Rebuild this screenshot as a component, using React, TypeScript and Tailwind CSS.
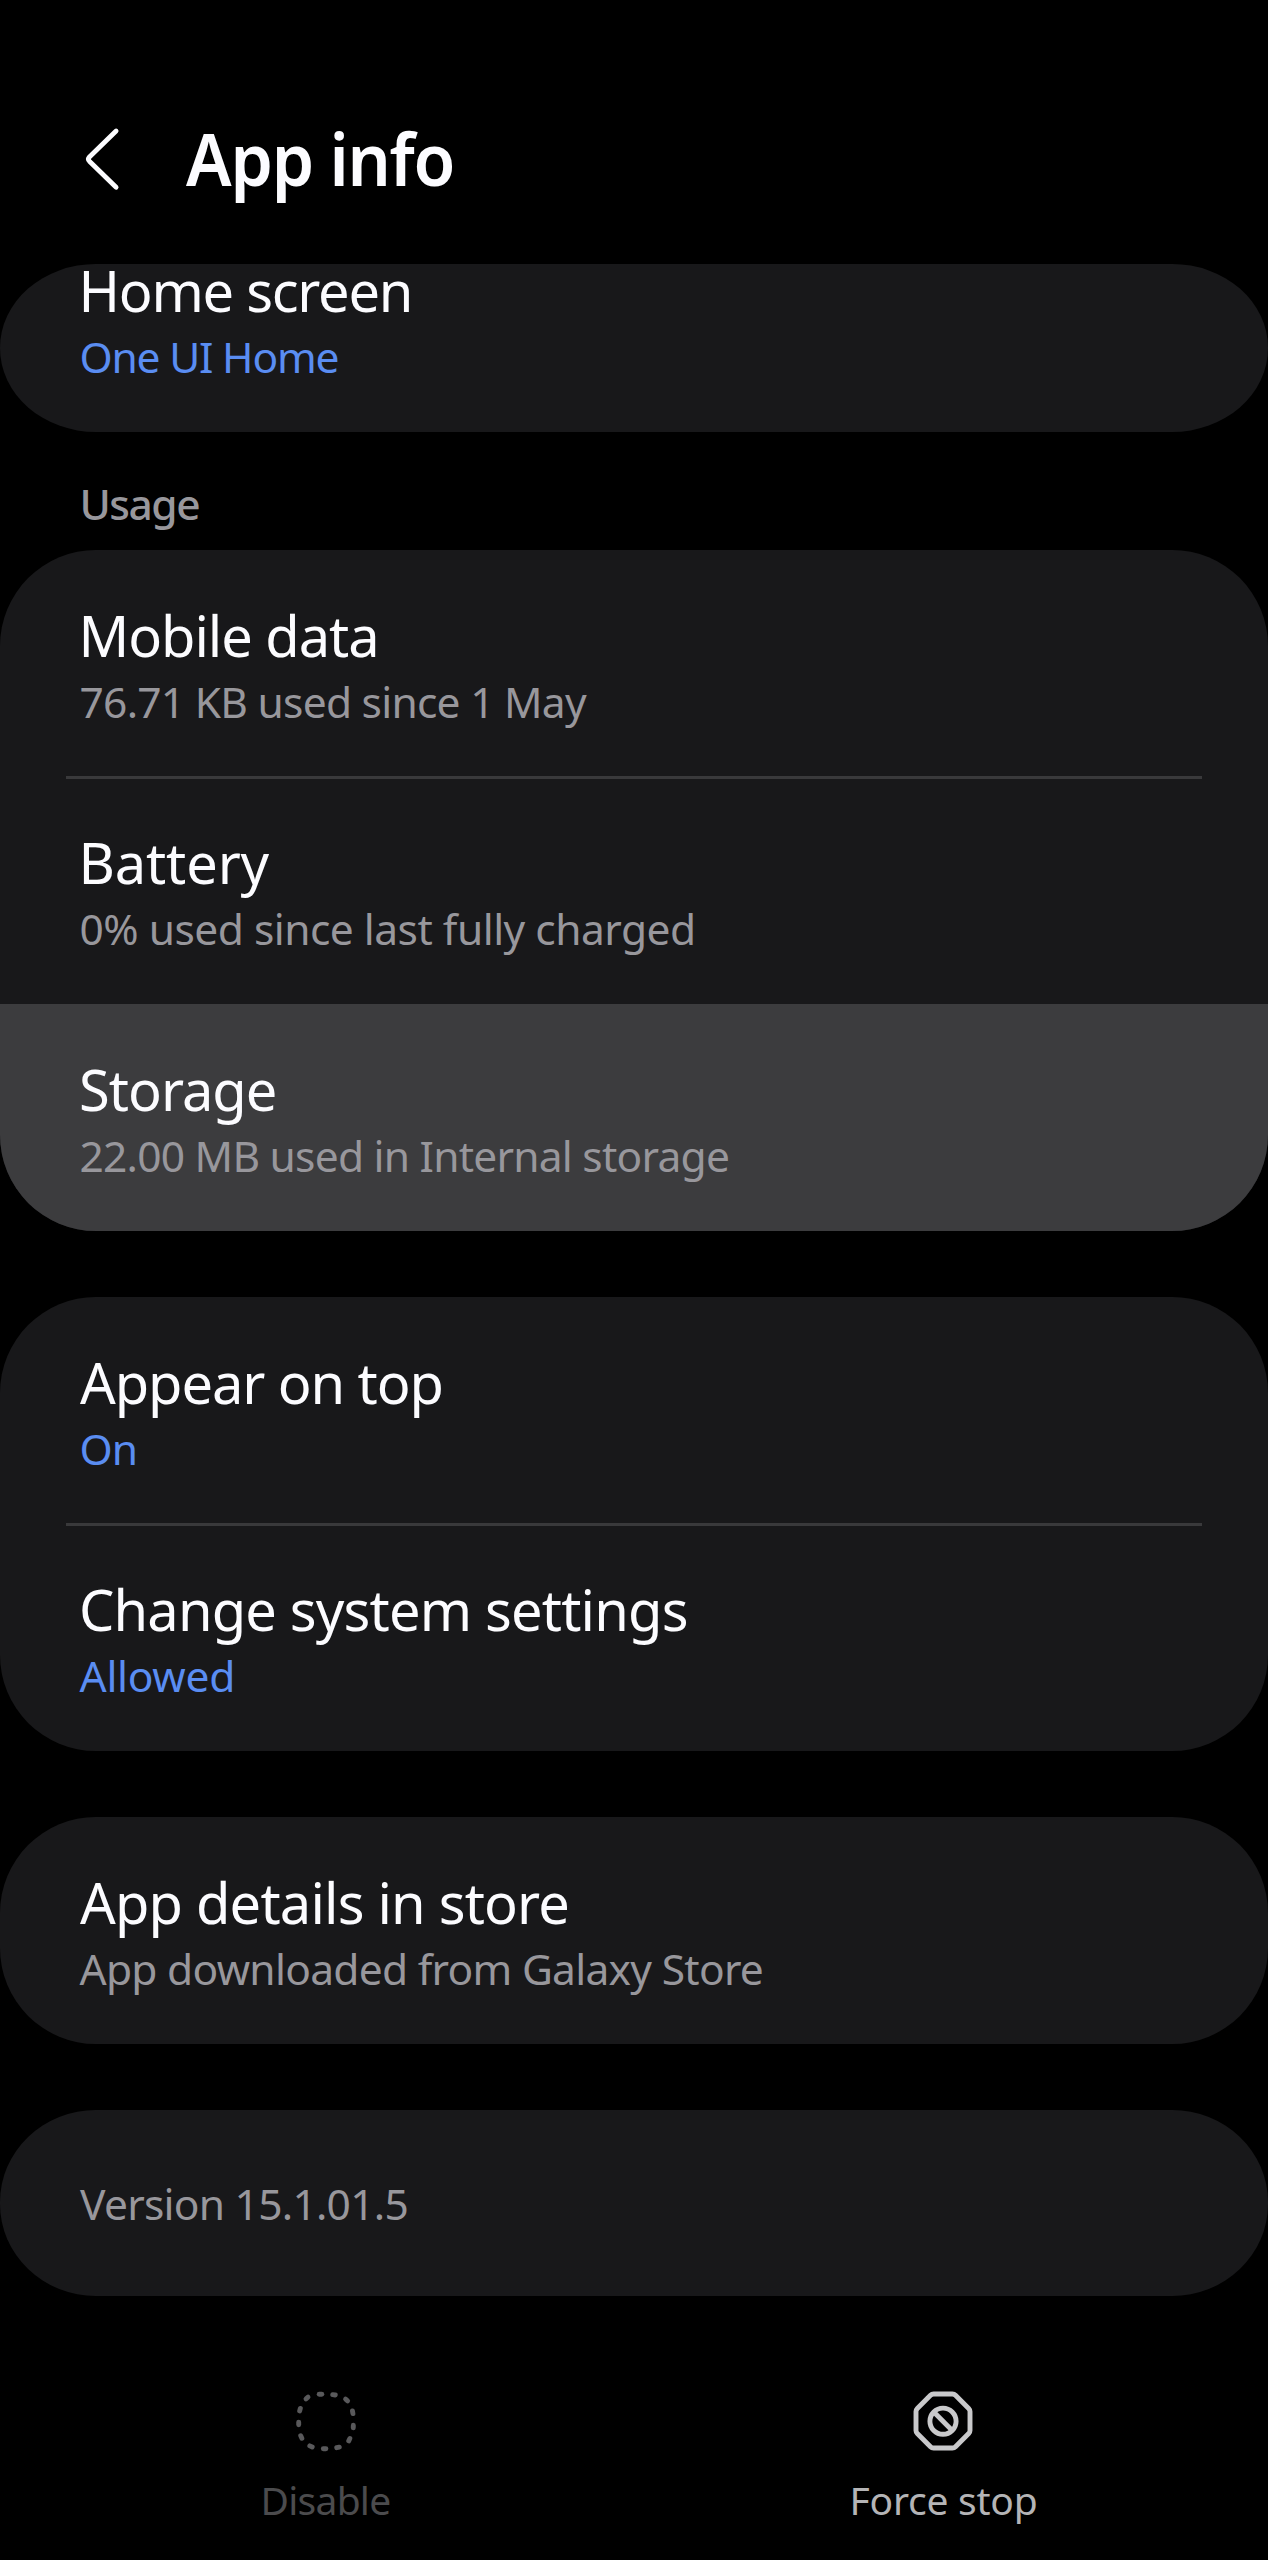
import type { ReactNode } from "react";
import { clsx } from "clsx";

type RowProps = {
  title: string;
  titleClass?: string;
  detail: string;
  detailClass?: string;
  accent?: boolean;
  pressed?: boolean;
  clipped?: boolean;
};

function Row({ title, titleClass, detail, detailClass, accent, pressed, clipped }: RowProps) {
  return (
    <div
      className={clsx(
        "flex shrink-0 flex-col",
        clipped ? "h-[168px]" : "h-[227.2px] pt-[47.3px]",
        pressed && "rounded-b-[96px] bg-[#3c3c3e]",
      )}
    >
      <div
        className={clsx(
          "text-[56px] whitespace-nowrap text-[#fcfcff]",
          clipped ? "h-[63.6px] leading-[52px]" : "h-[76px] leading-[76px]",
          titleClass,
        )}
      >
        {title}
      </div>
      <div
        className={clsx(
          "h-[58px] pl-[79.5px] text-[42.5px] leading-[58px] whitespace-nowrap",
          accent ? "text-[#5a8df2]" : "text-[#98979c]",
          detailClass,
        )}
      >
        {detail}
      </div>
    </div>
  );
}

function Card({ children, className }: { children: ReactNode; className?: string }) {
  return <section className={clsx("flex shrink-0 flex-col bg-[#18181a]", className)}>{children}</section>;
}

function Divider() {
  return <div className="mx-[66px] -mt-px -mb-[2px] h-[3px] shrink-0 bg-[#39393b]" />;
}

// x, y and tangent angle of every dash around the rounded square
const DASHES = [
  [24.5, 3.3, 0],
  [38, 3.8, 8],
  [50.6, 9, 40],
  [56.7, 21.3, 80],
  [57.3, 35.6, 92],
  [53.3, 48.7, 115],
  [42, 56.4, -12],
  [28.6, 57.7, 0],
  [15, 55.4, 25],
  [5.3, 46, 65],
  [2.7, 32.4, 90],
  [4, 18.7, 105],
  [11, 7, -40],
];

function DisableIcon() {
  return (
    <svg viewBox="0 0 60 60" className="size-[60px] overflow-visible" fill="none" stroke="#59595b" strokeWidth="4.9" strokeLinecap="round">
      {DASHES.map(([x, y, a]) => (
        <path key={`${x}-${y}`} d="M-1.3 0H1.3" transform={`translate(${x} ${y}) rotate(${a})`} />
      ))}
    </svg>
  );
}

function ForceStopIcon() {
  return (
    <svg viewBox="0 0 60 60" className="size-[60px] overflow-visible" fill="none" stroke="#c9c9cb" strokeWidth="4.9" strokeLinejoin="round">
      <path d="M20.6 3H39.4Q41.2 3 42.5 4.3L55.7 17.5Q57 18.8 57 20.6V39.4Q57 41.2 55.7 42.5L42.5 55.7Q41.2 57 39.4 57H20.6Q18.8 57 17.5 55.7L4.3 42.5Q3 41.2 3 39.4V20.6Q3 18.8 4.3 17.5L17.5 4.3Q18.8 3 20.6 3Z" />
      <circle cx="30" cy="30.2" r="13.1" />
      <path d="M20.8 21L39.2 39.4" />
    </svg>
  );
}

export default function App() {
  return (
    <main className="flex h-[2560px] w-[1268px] flex-col overflow-hidden bg-black font-['Noto_Sans',sans-serif]">
      <header className="flex h-[264px] shrink-0 pt-[109px] pl-[84px]">
        <svg viewBox="0 0 40 64" className="mt-[17.5px] h-[64px] w-[40px]" fill="none" stroke="#fcfcff" strokeWidth="4.8" strokeLinecap="round" strokeLinejoin="round">
          <path d="M32.1 4L5.4 30Q3.4 32.1 5.4 34.2L32.1 60.3" />
        </svg>
        <h1 className="ml-[62px] h-[98px] origin-left scale-x-[0.95] text-[71.5px] leading-[99px] font-semibold tracking-[-1.3px] whitespace-nowrap text-[#fcfcff]">
          App info
        </h1>
      </header>

      <Card className="h-[168px] rounded-[96px/84px]">
        <Row title="Home screen" titleClass="pl-[78.5px] tracking-[-1.25px]" detail="One UI Home" detailClass="tracking-[-1.2px]" accent clipped />
      </Card>

      <h2 className="h-[117.6px] shrink-0 pt-[43px] pl-[79.5px] text-[42.5px] leading-[58px] font-medium tracking-[-1.5px] text-[#98979c]">
        Usage
      </h2>

      <div className="flex flex-col gap-[65.8px]">
        <Card className="rounded-[96px]">
          <Row title="Mobile data" titleClass="pl-[78.5px] tracking-[-1.05px]" detail="76.71 KB used since 1 May" detailClass="tracking-[-0.74px]" />
          <Divider />
          <Row title="Battery" titleClass="pl-[78.5px] tracking-[-0.14px]" detail="0% used since last fully charged" detailClass="tracking-[-0.51px]" />
          <Row title="Storage" titleClass="pl-[79px] tracking-[-0.98px]" detail="22.00 MB used in Internal storage" detailClass="tracking-[-0.76px]" pressed />
        </Card>

        <Card className="rounded-[96px]">
          <Row title="Appear on top" titleClass="pl-[80px] tracking-[-1.08px]" detail="On" detailClass="tracking-[-1px]" accent />
          <Divider />
          <Row title="Change system settings" titleClass="pl-[79px] tracking-[-0.82px]" detail="Allowed" detailClass="tracking-[-0.27px]" accent />
        </Card>

        <Card className="rounded-[96px]">
          <Row
            title="App details in store"
            titleClass="pl-[80px] tracking-[-0.81px]"
            detail="App downloaded from Galaxy Store"
            detailClass="tracking-[-0.72px]"
          />
        </Card>

        <Card className="h-[185.4px] rounded-[96px/92px] pt-[64.8px] pl-[80px]">
          <p className="text-[42.5px] leading-[58px] tracking-[-0.74px] text-[#98979c]">Version 15.1.01.5</p>
        </Card>
      </div>

      <nav className="mt-[95px] grid grid-cols-2 px-[17px] text-[39px] leading-[54px]">
        <button className="flex flex-col items-center gap-[22px] text-[#4b4b4d]">
          <DisableIcon />
          <span className="tracking-[-0.76px]">Disable</span>
        </button>
        <button className="flex flex-col items-center gap-[22px] text-[#b4b4b6]">
          <ForceStopIcon />
          <span className="pl-[2px] tracking-[-0.26px]">Force stop</span>
        </button>
      </nav>
    </main>
  );
}
